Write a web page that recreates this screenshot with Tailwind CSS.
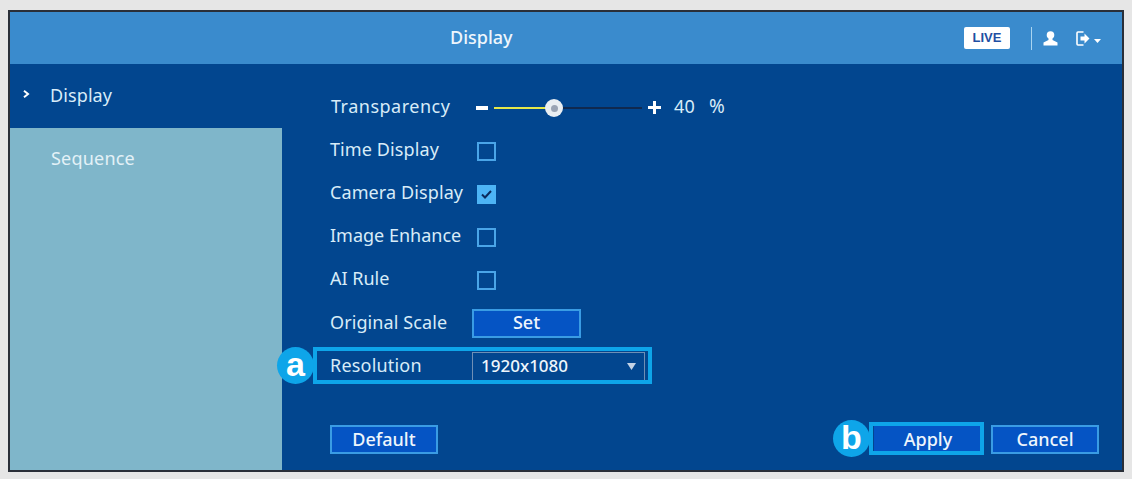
<!DOCTYPE html>
<html>
<head>
<meta charset="utf-8">
<script src="https://cdn.jsdelivr.net/npm/@tailwindcss/browser@4"></script>
</head>
<body class="m-0 bg-[#e6e6e6]">
<div class="w-[1132px] h-[479px] pt-[10px] pl-[8px] pr-[8px] pb-[7px] font-['Noto_Sans',sans-serif] text-[18px] text-[#d8ecf8]">
  <div class="w-full h-[462px] border-2 border-[#2a2f38] flex flex-col overflow-hidden">
    <header class="h-[52px] shrink-0 bg-[#3a8bcd] relative flex items-center">
      <div class="absolute left-[440px] top-[12px] text-[18px] leading-[26px] font-medium text-[#eef6fc]">Display</div>
      <div class="ml-auto flex items-center pr-[21px]">
        <div class="w-[46px] h-[22px] bg-white rounded-[2px] flex items-center justify-center text-[#1f4fa3] text-[13px] font-['Liberation_Sans',sans-serif] font-bold">LIVE</div>
        <div class="w-px h-[23px] bg-[#a9d4f0] ml-[21px]"></div>
        <svg class="ml-[11px]" width="15" height="15" viewBox="0 0 15 15" fill="#fff"><circle cx="7.5" cy="4" r="3.8"/><path d="M5.500 7h4v2l5 2.400V14.500H.5v-3.100l5-2.400z"/></svg>
        <svg class="ml-[18px]" width="14" height="15" viewBox="0 0 14 15" fill="none"><path d="M7.500 1H2a1 1 0 0 0-1 1v11a1 1 0 0 0 1 1h5.500" stroke="#fff" stroke-width="1.600"/><path d="M4.500 5.500h4V2.500l5 5-5 5v-3h-4z" fill="#fff"/></svg>
        <svg class="ml-[4px] mt-[5px]" width="7" height="4" viewBox="0 0 7 4" fill="#fff"><path d="M0 0h7L3.500 4z"/></svg>
      </div>
    </header>
    <div class="flex flex-1 bg-[#02468f]">
      <aside class="w-[272px] shrink-0 flex flex-col">
        <div class="h-[64px] flex items-center relative pl-[40px] pb-[2px]">
          <svg class="absolute left-[13px] top-[26px]" width="7" height="8" viewBox="0 0 7 8" fill="none"><path d="M1 .8l4 3.200-4 3.200" stroke="#fff" stroke-width="2"/></svg>
          <span class="tracking-[0.1px]">Display</span>
        </div>
        <div class="flex-1 bg-[#7fb6ca] pl-[41px] pt-[17px] leading-[26px] text-[#e3f1f7] tracking-[0.2px]">Sequence</div>
      </aside>
      <main class="flex-1 relative pl-[48px] pt-[23px]">
        <div class="h-[43px] pb-[2px] flex items-center">
          <span class="w-[142px] mb-[2px] pl-[1px] tracking-[0.5px]">Transparency</span>
          <span class="w-[12px] h-[4px] bg-white ml-[4px]"></span>
          <div class="relative w-[148px] h-[2px] ml-[6px] bg-[#10294f] mt-[1px]">
            <div class="w-[60px] h-[2px] bg-[#e4e84a]"></div>
            <div class="absolute left-[51px] top-[-8px] w-[18px] h-[18px] rounded-full bg-[#e9eef2] flex items-center justify-center"><div class="w-[7px] h-[7px] rounded-full bg-[#9aa4b4]"></div></div>
          </div>
          <svg class="ml-[6px]" width="13" height="13" viewBox="0 0 13 13" fill="#fff"><path d="M5 0h3v5h5v3H8v5H5V8H0V5h5z"/></svg>
          <span class="ml-[13px] w-[35px] mb-[2px] tracking-[0.2px]">40</span>
          <span class="text-[19px] mb-[2px]">%</span>
        </div>
        <div class="h-[43px] pb-[2px] flex items-center">
          <span class="w-[147px] mb-[2px] tracking-[0.1px]">Time Display</span>
          <span class="w-[19px] h-[19px] border-2 border-[#4aa5e8] mt-[2px]"></span>
        </div>
        <div class="h-[43px] pb-[2px] flex items-center">
          <span class="w-[147px] mb-[2px] tracking-[0.1px]">Camera Display</span>
          <span class="w-[19px] h-[19px] bg-[#4db4f5] mt-[2px] flex items-center justify-center">
            <svg width="11" height="9" viewBox="0 0 11 9" fill="none"><path d="M1 4.500l3 3 6-6.500" stroke="#0b2a5c" stroke-width="2"/></svg>
          </span>
        </div>
        <div class="h-[43px] pb-[2px] flex items-center">
          <span class="w-[147px] mb-[2px]">Image Enhance</span>
          <span class="w-[19px] h-[19px] border-2 border-[#4aa5e8] mt-[2px]"></span>
        </div>
        <div class="h-[43px] pb-[2px] flex items-center">
          <span class="w-[147px] mb-[2px]">AI Rule</span>
          <span class="w-[19px] h-[19px] border-2 border-[#4aa5e8] mt-[2px]"></span>
        </div>
        <div class="h-[43px] pb-[2px] flex items-center">
          <span class="w-[142px] tracking-[0.1px]">Original Scale</span>
          <button class="w-[109px] h-[29px] mt-[2px] bg-[#0554c4] border-2 border-[#3a9ce4] text-[#eef6fc] font-medium leading-none pb-[4px]">Set</button>
        </div>
        <div class="h-[43px] pb-[2px] flex items-center">
          <span class="w-[142px] tracking-[0.2px]">Resolution</span>
          <div class="w-[173px] h-[29px] mt-[2px] border border-[#6f8fb5] pl-[8px] pr-[8px] flex items-center justify-between text-[#eef6fc] text-[17px] font-medium">
            <span class="mb-[2px]">1920x1080</span>
            <svg width="9" height="7" viewBox="0 0 9 7" fill="#c3d3e6"><path d="M0 0h9L4.500 7z"/></svg>
          </div>
        </div>
        <!-- annotation frames -->
        <div class="absolute left-[31px] top-[283px] w-[339px] h-[37px] border-[4px] border-[#0ea5e9]"></div>
        <div class="absolute left-[-5px] top-[283px] w-[37px] h-[37px] rounded-full bg-[#0ea5e9] flex items-center justify-center text-white font-['Liberation_Sans',sans-serif] font-bold text-[34px] leading-none pb-[3px]">a</div>
        <div class="absolute left-[587px] top-[358px] w-[115px] h-[33px] border-[4px] border-[#0ea5e9]"></div>
        <div class="absolute left-[551px] top-[356px] w-[37px] h-[37px] rounded-full bg-[#0ea5e9] flex items-center justify-center text-white font-['Liberation_Sans',sans-serif] font-bold text-[34px] leading-none pb-[3px]">b</div>
        <!-- footer row -->
        <div class="flex items-center mt-[37px]">
          <button class="w-[108px] h-[29px] bg-[#0554c4] border-2 border-[#3a9ce4] text-[#eef6fc] font-medium leading-none pb-[2px]">Default</button>
          <div class="ml-auto flex gap-[9px] pr-[23px]">
            <button class="w-[108px] h-[29px] bg-[#0554c4] text-[#eef6fc] font-medium leading-none pb-[2px]">Apply</button>
            <button class="w-[108px] h-[29px] bg-[#0554c4] border-2 border-[#3a9ce4] text-[#eef6fc] font-medium leading-none pb-[2px]">Cancel</button>
          </div>
        </div>
      </main>
    </div>
  </div>
</div>
</body>
</html>
